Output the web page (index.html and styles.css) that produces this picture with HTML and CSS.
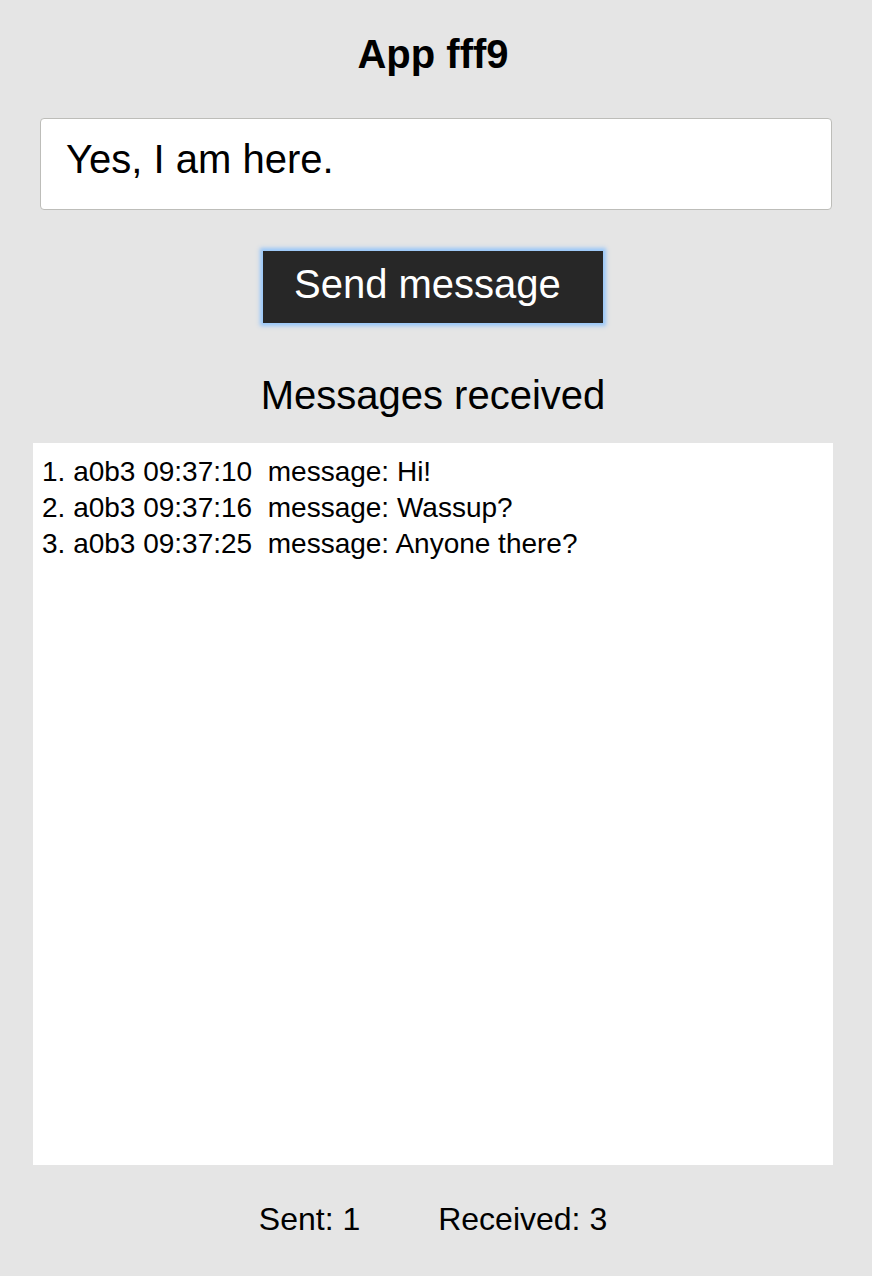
FILE: index.html
```html
<!DOCTYPE html>
<html lang="en">
<head>
<meta charset="utf-8">
<title>App fff9</title>
<link rel="stylesheet" href="styles.css">
</head>
<body>
<main class="app">
  <h1 class="app-title">App fff9</h1>
  <input class="msg-input" type="text" value="Yes, I am here.">
  <div class="send-row">
    <button class="send-btn" type="button">Send message</button>
  </div>
  <h2 class="received-title">Messages received</h2>
  <div class="messages">
    <div class="msg-line">1. a0b3 09:37:10  message: Hi!</div>
    <div class="msg-line">2. a0b3 09:37:16  message: Wassup?</div>
    <div class="msg-line">3. a0b3 09:37:25  message: Anyone there?</div>
  </div>
  <div class="stats">
    <span class="stat">Sent: 1</span>
    <span class="stat">Received: 3</span>
  </div>
</main>
</body>
</html>
```
FILE: styles.css
```css
html, body {
  margin: 0;
  padding: 0;
  background: #e5e5e5;
}

body {
  font-family: "Liberation Sans", Arial, Helvetica, sans-serif;
  color: #000;
}

.app {
  width: 800px;
  padding: 31px 39px 0 33px;
  display: flex;
  flex-direction: column;
}

.app-title {
  margin: 0;
  font-size: 40px;
  line-height: 46px;
  font-weight: bold;
  text-align: center;
}

.msg-input {
  box-sizing: border-box;
  width: 792px;
  height: 92px;
  margin: 41px 1px 0 7px;
  padding: 0 0 10px 25px;
  border: 1px solid #bdbdb9;
  border-radius: 4px;
  background: #fff;
  font-family: "Liberation Sans", Arial, Helvetica, sans-serif;
  font-size: 40px;
  color: #000;
  outline: none;
}

.send-row {
  display: flex;
  justify-content: center;
  margin-top: 41px;
}

.send-btn {
  box-sizing: border-box;
  width: 340px;
  height: 72px;
  padding: 0 0 6px 31px;
  border: none;
  border-radius: 0;
  background: #272727;
  color: #fff;
  font-family: "Liberation Sans", Arial, Helvetica, sans-serif;
  font-size: 40px;
  line-height: 46px;
  text-align: left;
  box-shadow: 0 0 4px 3px rgba(130, 190, 255, 0.8);
  cursor: pointer;
}

.received-title {
  margin: 49px 0 0;
  font-size: 40px;
  line-height: 46px;
  font-weight: normal;
  text-align: center;
}

.messages {
  box-sizing: border-box;
  height: 722px;
  margin-top: 25px;
  padding: 11px 9px;
  background: #fff;
}

.msg-line {
  font-size: 28px;
  line-height: 36px;
  white-space: pre;
}

.stats {
  display: flex;
  justify-content: center;
  gap: 78px;
  margin-top: 36px;
  font-size: 32px;
  line-height: 36px;
}
```
